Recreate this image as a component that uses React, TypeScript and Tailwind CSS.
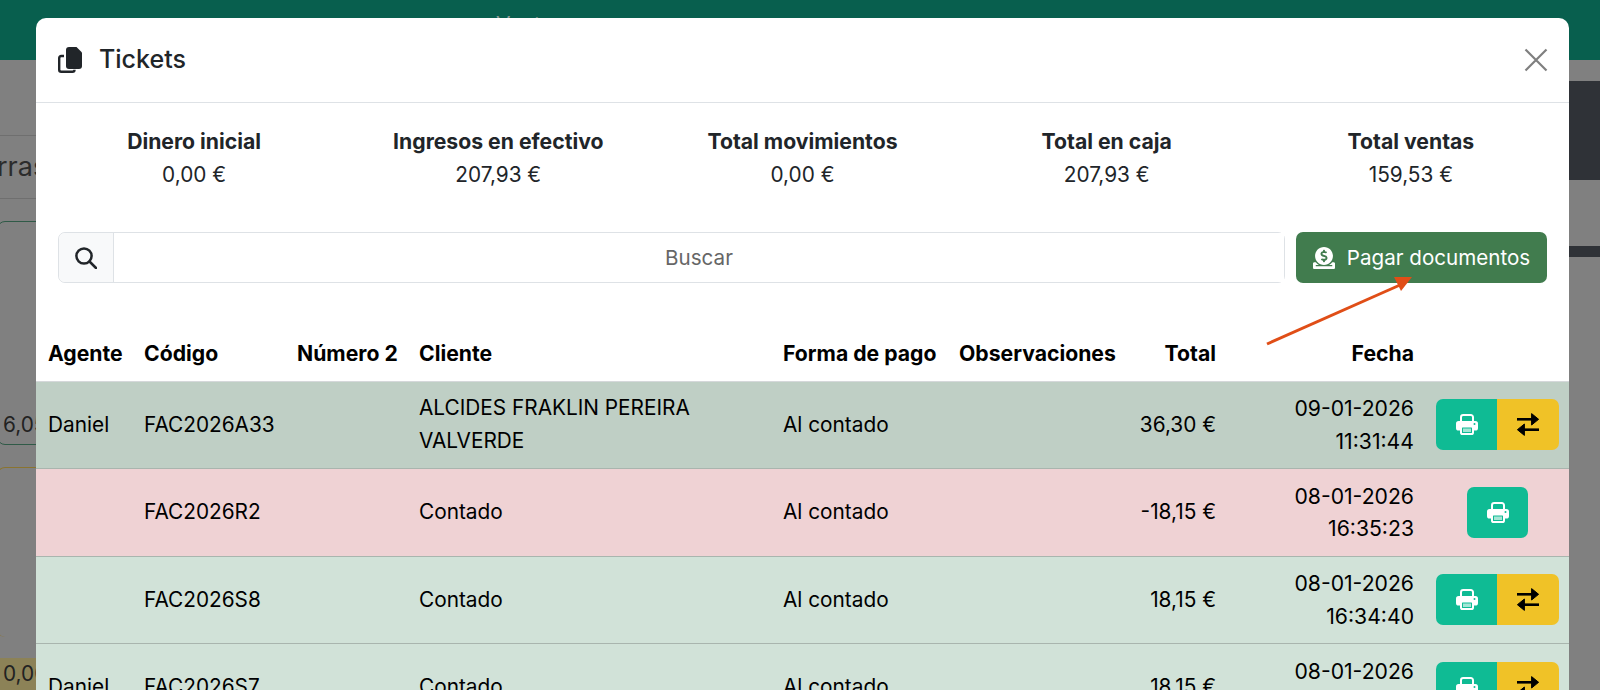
import React from "react";
import { FaDonate } from "react-icons/fa";

const summary = [
  ["Dinero inicial", "0,00 €"],
  ["Ingresos en efectivo", "207,93 €"],
  ["Total movimientos", "0,00 €"],
  ["Total en caja", "207,93 €"],
  ["Total ventas", "159,53 €"],
];

const rows = [
  { bg: "bg-[#bfcfc5]", agent: "Daniel", code: "FAC2026A33", client: "ALCIDES FRAKLIN PEREIRA VALVERDE", total: "36,30 €", date: "09-01-2026", time: "11:31:44", swap: true },
  { bg: "bg-[#efd2d4]", agent: "", code: "FAC2026R2", client: "Contado", total: "-18,15 €", date: "08-01-2026", time: "16:35:23", swap: false },
  { bg: "bg-[#d1e2d8]", agent: "", code: "FAC2026S8", client: "Contado", total: "18,15 €", date: "08-01-2026", time: "16:34:40", swap: true },
  { bg: "bg-[#d1e2d8]", agent: "Daniel", code: "FAC2026S7", client: "Contado", total: "18,15 €", date: "08-01-2026", time: "16:33:12", swap: true },
];

function PrinterIcon() {
  return (
    <svg width="22" height="21" viewBox="0 0 22 21" aria-hidden="true">
      <path d="M5 8V3.2A2.2 2.2 0 0 1 7.2 1h7.6A2.2 2.2 0 0 1 17 3.2V8" fill="none" stroke="#fff" strokeWidth="2" />
      <rect x="0" y="7" width="22" height="9.5" rx="2.6" fill="#fff" />
      <rect x="5" y="12.5" width="12" height="7.5" rx="1.6" fill="#0fbb94" stroke="#fff" strokeWidth="2" />
      <rect x="7" y="14.5" width="8" height="3.5" fill="#a5e6d5" />
      <circle cx="18.5" cy="10" r="1" fill="#0fbb94" />
    </svg>
  );
}

function SwapIcon() {
  return (
    <svg width="22" height="23" viewBox="0 0 22 23" fill="#000" aria-hidden="true">
      <rect x="0" y="5" width="16" height="2.6" />
      <path d="M14.6 0.6 21.6 6.3 14.6 12Z" stroke="#000" strokeWidth="1" strokeLinejoin="round" />
      <rect x="6" y="15.4" width="16" height="2.6" />
      <path d="M7.4 11 0.4 16.7 7.4 22.4Z" stroke="#000" strokeWidth="1" strokeLinejoin="round" />
    </svg>
  );
}

function CopyIcon() {
  return (
    <svg width="24" height="26" viewBox="0 0 24 26" fill="none" aria-hidden="true">
      <path d="M11 0H18.5L24 5.5V19A3 3 0 0 1 21 22H11A3 3 0 0 1 8 19V3A3 3 0 0 1 11 0Z" fill="#212529" />
      <path d="M6 9H3.2A2 2 0 0 0 1.2 11V22.8A2 2 0 0 0 3.2 24.8H14.5A2 2 0 0 0 16.5 22.8" stroke="#212529" strokeWidth="2.4" />
    </svg>
  );
}

function SearchIcon() {
  return (
    <svg width="22" height="22" viewBox="0 0 22 22" fill="none" stroke="#212529" strokeWidth="2.5" aria-hidden="true">
      <circle cx="9" cy="9" r="7.6" />
      <path d="M14.5 14.5 21 21" strokeLinecap="round" />
    </svg>
  );
}

function Actions({ swap }: { swap: boolean }) {
  return (
    <div className="flex justify-center">
      <button className={`flex h-[51px] w-[61px] items-center justify-center bg-[#0fbb94] ${swap ? "rounded-l-[7px]" : "rounded-[7px]"}`}>
        <PrinterIcon />
      </button>
      {swap && (
        <button className="flex h-[51px] w-[62px] items-center justify-center rounded-r-[7px] bg-[#f0c227]">
          <SwapIcon />
        </button>
      )}
    </div>
  );
}

export default function App() {
  return (
    <div className="relative h-[690px] w-[1600px] overflow-hidden bg-[#808080] font-['Inter',sans-serif] text-[#212529]">
      <div className="h-[60px] bg-[#085f4e] pl-[496px] pt-[13px] text-[21px] leading-[24px] text-[#8d9a96]">Ventas</div>
      <div className="flex items-start justify-between">
        <div className="w-[36px] pt-[75px]">
          <div className="border-y border-[#6f6f6f] py-[14px] text-[27px] leading-[34px] text-[#2c2c2c]">
            <span className="-ml-[3px] block whitespace-nowrap">rras</span>
          </div>
          <div className="-ml-[3px] -mr-[20px] mt-[22px] h-[224px] rounded-[8px] border border-[#2f5a47] pl-[5px] pt-[190px] text-[20.8px] leading-[26px] text-[#222]">
            <span className="block whitespace-nowrap">6,05</span>
          </div>
          <div className="-ml-[3px] -mr-[20px] mt-[22px] h-[170px] rounded-[8px] border border-b-0 border-[#8a7430]" />
          <div className="mt-[21px] h-[34px] bg-[#8c8257] pl-[3px] pt-[3px] text-[20.8px] leading-[26px] text-[#222]">
            <span className="block whitespace-nowrap">0,00</span>
          </div>
        </div>
        <div className="mt-[21px] w-[31px]">
          <div className="h-[99px] bg-[#2f3237]" />
          <div className="mt-[66px] h-[11px] bg-[#2f3237]" />
        </div>
      </div>

      <div className="absolute left-[36px] top-[18px] w-[1533px] rounded-t-[10px] bg-white">
        <header className="flex h-[85px] items-center justify-between border-b border-[#dee2e6] pl-[22px] pr-[21px]">
          <div className="flex items-center gap-[17px]">
            <CopyIcon />
            <h1 className="pb-[2px] text-[25px] font-medium leading-none">Tickets</h1>
          </div>
          <button aria-label="Cerrar" className="flex h-[24px] w-[24px] items-center justify-center">
            <svg viewBox="0 0 24 24" className="h-[24px] w-[24px]" fill="none" stroke="#7f7f7f" strokeWidth="2.2">
              <path d="M1.5 1.5 22.5 22.5M22.5 1.5 1.5 22.5" />
            </svg>
          </button>
        </header>

        <section className="grid grid-cols-5 px-[6px] pt-[22px] text-center leading-[32px]">
          {summary.map(([t, v]) => (
            <div key={t} className="px-3">
              <div className="text-[21.2px] font-bold">{t}</div>
              <div className="mt-[2px] text-[20.8px]">{v}</div>
            </div>
          ))}
        </section>

        <section className="flex gap-[11px] px-[22px] pt-[41px]">
          <div className="flex h-[51px] flex-1 rounded-[7px] border border-[#dee2e6]">
            <span className="flex w-[55px] items-center justify-center rounded-l-[7px] border-r border-[#dee2e6] bg-[#f8f9fa]">
              <SearchIcon />
            </span>
            <input placeholder="Buscar" className="min-w-0 flex-1 bg-white pt-[2px] text-center text-[20.6px] outline-none placeholder:text-[#666]" />
          </div>
          <button className="flex h-[51px] w-[251px] items-center justify-center gap-[12px] rounded-[7px] bg-[#417c4e] pt-[2px] text-[20.6px] text-white">
            <FaDonate className="mb-[2px] text-[22px]" />
            Pagar documentos
          </button>
        </section>

        <table className="mt-[44px] w-[1533px] table-fixed border-collapse text-[20.8px] text-black">
          <colgroup>
            <col className="w-[96px]" />
            <col className="w-[153px]" />
            <col className="w-[122px]" />
            <col className="w-[364px]" />
            <col className="w-[176px]" />
            <col className="w-[180px]" />
            <col className="w-[101px]" />
            <col className="w-[198px]" />
            <col className="w-[143px]" />
          </colgroup>
          <thead>
            <tr className="h-[54px] whitespace-nowrap border-b border-[#d5d8da] text-left text-[21.2px] font-bold">
              <th className="px-3">Agente</th>
              <th className="px-3">Código</th>
              <th className="pl-3">Número 2</th>
              <th className="px-3">Cliente</th>
              <th className="px-3">Forma de pago</th>
              <th className="px-3">Observaciones</th>
              <th className="px-3 text-right">Total</th>
              <th className="px-3 text-right">Fecha</th>
              <th />
            </tr>
          </thead>
          <tbody>
            {rows.map((r) => (
              <tr key={r.code} className={`h-[87.5px] border-b border-[#a9b5ae] leading-[32.5px] ${r.bg}`}>
                <td className="px-3">{r.agent}</td>
                <td className="px-3">{r.code}</td>
                <td />
                <td className="px-3">{r.client}</td>
                <td className="px-3">Al contado</td>
                <td />
                <td className="px-3 text-right">{r.total}</td>
                <td className="px-3 text-right text-[21.2px]">
                  {r.date}
                  <br />
                  {r.time}
                </td>
                <td><Actions swap={r.swap} /></td>
              </tr>
            ))}
          </tbody>
        </table>
      </div>

      <svg className="pointer-events-none absolute left-[1260px] top-[270px]" width="160" height="80" viewBox="0 0 160 80">
        <path d="M7 74 L140 15" stroke="#e04e17" strokeWidth="3" />
        <path d="M134 7 L152 7 L141 21 Z" fill="#e04e17" />
      </svg>
    </div>
  );
}
